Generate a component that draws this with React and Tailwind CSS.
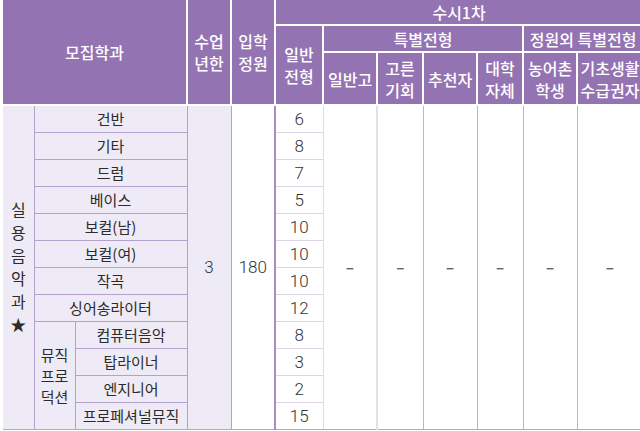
import React from "react";

const majors = [
    { name: "건반", count: 6 },
    { name: "기타", count: 8 },
    { name: "드럼", count: 7 },
    { name: "베이스", count: 5 },
    { name: "보컬(남)", count: 10 },
    { name: "보컬(여)", count: 10 },
    { name: "작곡", count: 10 },
    { name: "싱어송라이터", count: 12 },
    { name: "컴퓨터음악", count: 8, sub: true },
    { name: "탑라이너", count: 3, sub: true },
    { name: "엔지니어", count: 2, sub: true },
    { name: "프로페셔널뮤직", count: 15, sub: true },
];

const th = "bg-[#9473b3] text-white text-[16px] font-medium border-2 border-white text-center align-middle p-0 leading-[22px]";
const lav = "bg-[#efebf6] border border-[#b3a2cd] text-center align-middle p-0 text-[#2b2b2b]";
const num = "font-['Roboto',sans-serif] font-light text-[17px] text-[#333]";
const dash = "bg-white border-b border-b-[#b9a0d6] text-center align-middle text-[#666] font-bold";

const App = () => {
    return (
        <div className="w-[640px] h-[431px] bg-white overflow-hidden" style={{ fontFamily: '"Noto Sans CJK KR", "Noto Sans", sans-serif' }}>
            <table className="table-fixed border-collapse ml-[3px] w-[639px] text-[15px]">
                <colgroup>
                    <col className="w-[31px]" />
                    <col className="w-[41px]" />
                    <col className="w-[112px]" />
                    <col className="w-[44px]" />
                    <col className="w-[44px]" />
                    <col className="w-[48px]" />
                    <col className="w-[54px]" />
                    <col className="w-[46px]" />
                    <col className="w-[54px]" />
                    <col className="w-[46px]" />
                    <col className="w-[54px]" />
                    <col className="w-[65px]" />
                </colgroup>
                <thead>
                    <tr className="h-[25px]">
                        <th rowSpan={3} colSpan={3} className={`${th} border-l-0 border-t-0`}>모집학과</th>
                        <th rowSpan={3} className={`${th} border-t-0`}>수업<br />년한</th>
                        <th rowSpan={3} className={`${th} border-t-0`}>입학<br />정원</th>
                        <th colSpan={7} className={`${th} border-t-0 border-r-0`}>수시1차</th>
                    </tr>
                    <tr className="h-[27px]">
                        <th rowSpan={2} className={th}>일반<br />전형</th>
                        <th colSpan={4} className={th}>특별전형</th>
                        <th colSpan={2} className={`${th} border-r-0`}>정원외 특별전형</th>
                    </tr>
                    <tr className="h-[53px]">
                        <th className={th}>일반고</th>
                        <th className={th}>고른<br />기회</th>
                        <th className={th}>추천자</th>
                        <th className={th}>대학<br />자체</th>
                        <th className={th}>농어촌<br />학생</th>
                        <th className={`${th} border-r-0`}>기초생활<br />수급권자</th>
                    </tr>
                </thead>
                <tbody>
                    {majors.map((item, i) => (
                        <tr key={item.name} className="h-[27px]">
                            {i === 0 && (
                                <td rowSpan={12} className={`${lav} border-l-0 border-b-[#b9a0d6] leading-[23px] text-[16px]`}>
                                    실<br />용<br />음<br />악<br />과<br />★
                                </td>
                            )}
                            {i === 8 && (
                                <td rowSpan={4} className={`${lav} leading-[21px] border-b-[#b9a0d6]`}>
                                    뮤직<br />프로<br />덕션
                                </td>
                            )}
                            <td colSpan={item.sub ? 1 : 2} className={`${lav} leading-[20px] ${i === 11 ? "border-b-[#b9a0d6]" : ""}`}>
                                {item.name}
                            </td>
                            {i === 0 && (
                                <>
                                    <td rowSpan={12} className={`${lav} ${num} border-b-[#b9a0d6]`}>3</td>
                                    <td rowSpan={12} className={`bg-white border border-[#b3a2cd] border-b-[#b9a0d6] text-center align-middle ${num}`}>180</td>
                                </>
                            )}
                            <td className={`bg-white border-l-2 border-l-[#a68dc4] border-b border-[#dcd5e8] text-center align-middle leading-[20px] ${num} ${i === 11 ? "border-b-[#b9a0d6]" : ""}`}>
                                {item.count}
                            </td>
                            {i === 0 && (
                                <>
                                    <td rowSpan={12} className={`${dash} border-l border-l-[#dddddd]`}>–</td>
                                    <td rowSpan={12} className={`${dash} border-l-2 border-l-[#e2e2e2]`}>–</td>
                                    <td rowSpan={12} className={`${dash} border-l border-l-[#bdb3cf]`}>–</td>
                                    <td rowSpan={12} className={`${dash} border-l border-l-[#bdb3cf]`}>–</td>
                                    <td rowSpan={12} className={`${dash} border-l border-l-[#bdb3cf]`}>–</td>
                                    <td rowSpan={12} className={`${dash} border-l border-l-[#bdb3cf]`}>–</td>
                                </>
                            )}
                        </tr>
                    ))}
                </tbody>
            </table>
        </div>
    );
};

export default App;
